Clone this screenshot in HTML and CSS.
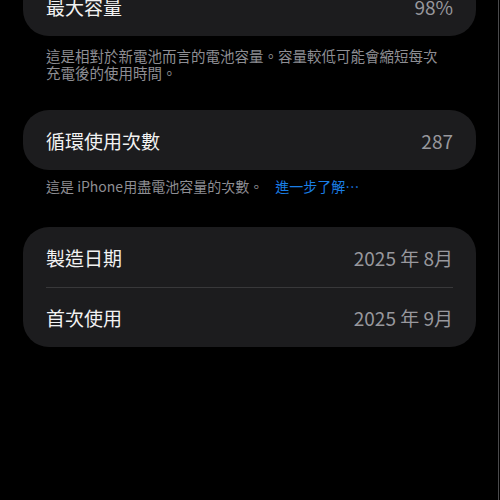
FILE: index.html
```html
<!DOCTYPE html>
<html lang="zh-Hant">
<head>
    <meta charset="UTF-8">
    <meta name="viewport" content="width=device-width, initial-scale=1.0">
    <title>電池健康度</title>
    <link rel="stylesheet" href="styles.css">
</head>
<body>
    <div class="screen">
        <div class="card first">
            <div class="row">
                <span class="label">最大容量</span>
                <span class="value">98%</span>
            </div>
        </div>
        <div class="note first-note">這是相對於新電池而言的電池容量。容量較低可能會縮短每次充電後的使用時間。</div>

        <div class="card">
            <div class="row">
                <span class="label">循環使用次數</span>
                <span class="value">287</span>
            </div>
        </div>
        <div class="note second-note">這是 iPhone用盡電池容量的次數。 <span class="link">進一步了解⋯</span></div>

        <div class="card dates">
            <div class="row">
                <span class="label">製造日期</span>
                <span class="value">2025 年 8月</span>
            </div>
            <div class="row">
                <span class="label">首次使用</span>
                <span class="value">2025 年 9月</span>
            </div>
        </div>
    </div>
</body>
</html>
```

FILE: styles.css
```css
html, body {
    margin: 0;
    padding: 0;
    background-color: #000;
}
body {
    font-family: "Noto Sans CJK TC", "Noto Sans", sans-serif;
    color: #fff;
}
.screen {
    width: 499px;
    height: 500px;
    overflow: hidden;
    border-right: 1px solid #4a4a4c;
    padding: 0 22px 0 23px;
    box-sizing: border-box;
}
.card {
    background-color: #1c1c1e;
    border-radius: 26px;
    padding: 0 23px;
}
.card.first {
    margin-top: -24px;
}
.card.dates {
    margin-top: 32px;
}
.row {
    height: 60px;
    display: flex;
    align-items: center;
    justify-content: space-between;
    box-sizing: border-box;
}
.dates .row + .row {
    border-top: 1px solid #38383a;
}
.label {
    font-size: 19px;
    color: #f2f2f2;
}
.value {
    font-size: 19px;
    color: #98989d;
}
.note {
    font-size: 14.5px;
    line-height: 17px;
    color: #8e8e93;
    padding: 0 30px 0 23px;
}
.first-note {
    padding-top: 11px;
    margin-bottom: 29px;
}
.second-note {
    padding-top: 8px;
    font-size: 14px;
}
.link {
    color: #1a7ee6;
    margin-left: 9px;
}
```
